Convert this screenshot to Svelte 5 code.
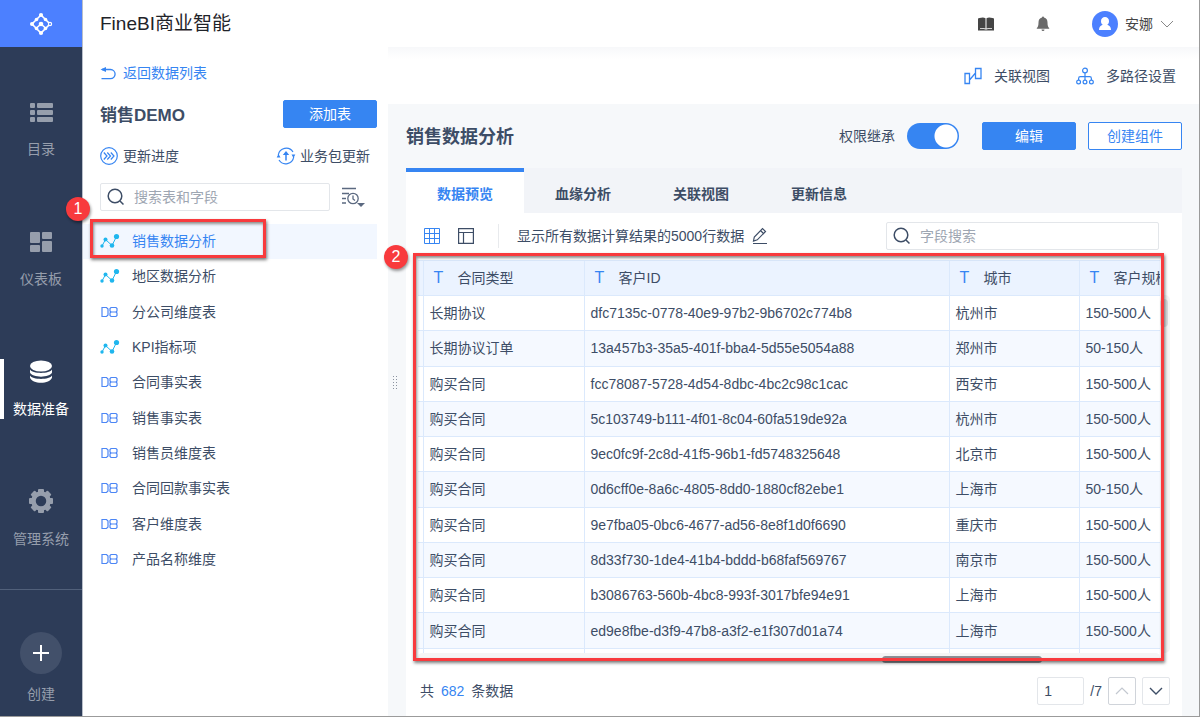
<script>
    const menu = [
        { id: "list", label: "目录" },
        { id: "board", label: "仪表板" },
        { id: "data", label: "数据准备" },
        { id: "gear", label: "管理系统" },
    ];

    const tables = [
        { name: "销售数据分析", type: "line" },
        { name: "地区数据分析", type: "line" },
        { name: "分公司维度表", type: "db" },
        { name: "KPI指标项", type: "line" },
        { name: "合同事实表", type: "db" },
        { name: "销售事实表", type: "db" },
        { name: "销售员维度表", type: "db" },
        { name: "合同回款事实表", type: "db" },
        { name: "客户维度表", type: "db" },
        { name: "产品名称维度", type: "db" },
    ];

    const tabs = ["数据预览", "血缘分析", "关联视图", "更新信息"];
    const columns = ["合同类型", "客户ID", "城市", "客户规模"];

    const rows = [
        ["长期协议", "dfc7135c-0778-40e9-97b2-9b6702c774b8", "杭州市", "150-500人"],
        ["长期协议订单", "13a457b3-35a5-401f-bba4-5d55e5054a88", "郑州市", "50-150人"],
        ["购买合同", "fcc78087-5728-4d54-8dbc-4bc2c98c1cac", "西安市", "150-500人"],
        ["购买合同", "5c103749-b111-4f01-8c04-60fa519de92a", "杭州市", "150-500人"],
        ["购买合同", "9ec0fc9f-2c8d-41f5-96b1-fd5748325648", "北京市", "150-500人"],
        ["购买合同", "0d6cff0e-8a6c-4805-8dd0-1880cf82ebe1", "上海市", "50-150人"],
        ["购买合同", "9e7fba05-0bc6-4677-ad56-8e8f1d0f6690", "重庆市", "150-500人"],
        ["购买合同", "8d33f730-1de4-41b4-bddd-b68faf569767", "南京市", "150-500人"],
        ["购买合同", "b3086763-560b-4bc8-993f-3017bfe94e91", "上海市", "150-500人"],
        ["购买合同", "ed9e8fbe-d3f9-47b8-a3f2-e1f307d01a74", "上海市", "150-500人"],
    ];

    let activeMenu = $state("data");
    let activeTable = $state(0);
    let activeTab = $state(0);
    let inherit = $state(true);
    let tableSearch = $state("");
    let fieldSearch = $state("");
    let page = $state("1");

    const teeth = [0, 45, 90, 135, 180, 225, 270, 315];
</script>

{#snippet searchIcon()}
    <svg width="18" height="18" viewBox="0 0 18 18" fill="none" stroke="#3d4d66" stroke-width="1.5">
        <circle cx="8" cy="8" r="6.8" />
        <path d="M13 13l3.500 3.500" />
    </svg>
{/snippet}

<div class="app">
    <aside class="sidebar">
        <a class="logo" href="#home" aria-label="FineBI">
            <svg width="24" height="24" viewBox="0 0 24 24" fill="#fff" stroke="#fff" stroke-width="1.6">
                <path d="M12 3L3 12L12 21L21 12L12 3" fill="none" />
                <path d="M7.5 16L12 12L16.5 16" fill="none" />
                <g stroke="none">
                    <circle cx="12" cy="3" r="2.1" />
                    <circle cx="12" cy="21" r="2.1" />
                    <circle cx="3" cy="12" r="2" />
                    <circle cx="12" cy="12" r="2.3" />
                    <circle cx="7.5" cy="7.5" r="1.8" />
                    <circle cx="16.5" cy="7.5" r="1.8" />
                    <circle cx="7.5" cy="16.5" r="1.8" />
                    <circle cx="16.5" cy="16.5" r="1.8" />
                </g>
                <circle cx="21" cy="12" r="1.6" fill="#4c80ff" stroke-width="1.2" />
            </svg>
        </a>
        <nav class="menu">
            {#each menu as item}
                <button class="menu-item" class:active={activeMenu === item.id} onclick={() => (activeMenu = item.id)}>
                    <svg width="26" height="26" viewBox="0 0 26 26" fill="currentColor">
                        {#if item.id === "list"}
                            <rect x="2" y="4" width="5" height="5" rx="1" />
                            <rect x="9" y="4" width="16" height="5" rx="1" />
                            <rect x="2" y="11" width="5" height="5" rx="1" />
                            <rect x="9" y="11" width="16" height="5" rx="1" />
                            <rect x="2" y="18" width="5" height="5" rx="1" />
                            <rect x="9" y="18" width="16" height="5" rx="1" />
                        {:else if item.id === "board"}
                            <rect x="2" y="3" width="10" height="11" rx="1" />
                            <rect x="14" y="3" width="10" height="7" rx="1" />
                            <rect x="2" y="16" width="10" height="7" rx="1" />
                            <rect x="14" y="12" width="10" height="11" rx="1" />
                        {:else if item.id === "data"}
                            <ellipse cx="13" cy="7" rx="11" ry="5.5" />
                            <path d="M2 10.500C4 15 22 15 24 10.500V13.500C22 19 4 19 2 13.500Z" />
                            <path d="M2 16.500C4 21 22 21 24 16.500V18.500C22 25.500 4 25.500 2 18.500Z" />
                        {:else}
                            <circle cx="13" cy="12" r="7.500" fill="none" stroke="currentColor" stroke-width="4.500" />
                            {#each teeth as angle}
                                <rect x="10" y="0" width="6" height="5" rx="1" transform="rotate({angle} 13 12)" />
                            {/each}
                        {/if}
                    </svg>
                    <span>{item.label}</span>
                </button>
            {/each}
        </nav>
        <button class="create">
            <span class="plus">
                <svg width="18" height="18" viewBox="0 0 18 18" stroke="#fff" stroke-width="2"><path d="M9 1V17M1 9H17" /></svg>
            </span>
            <span>创建</span>
        </button>
    </aside>

    <div class="right">
        <header class="topbar">
            <h1>FineBI商业智能</h1>
            <div class="user-area">
                <button class="icon-btn" aria-label="文档">
                    <svg width="16" height="14" viewBox="0 0 16 14" fill="#454545">
                        <path d="M0 1.500L1.500 1C4 .2 6 .2 7.500 1.200V11.500C6 10.800 4 10.700 2 11.200v.8c2-.4 4-.3 5.500.6h1c1.500-.9 3.500-1 5.500-.6v-.8c-2-.5-4-.4-5.500.3V1.200C10 .2 12 .2 14.500 1L16 1.500V13.500H0z" />
                    </svg>
                </button>
                <button class="icon-btn" aria-label="消息">
                    <svg width="14" height="16" viewBox="0 0 14 16" fill="#6a6a6a">
                        <path d="M6 1.500a1 1 0 0 1 2 0C10.500 2 11.500 4 11.500 6.500c0 3 .5 4.500 1.700 5.500v.8H.8V12C2 11 2.500 9.500 2.500 6.500 2.500 4 3.500 2 6 1.500zM5.500 13.500h3a1.500 1.500 0 0 1-3 0z" />
                    </svg>
                </button>
                <button class="user">
                    <svg width="26" height="26" viewBox="0 0 26 26">
                        <circle cx="13" cy="13" r="13" fill="#4c80ff" />
                        <path d="M13 6a4 4 0 0 1 4 4.200c0 1.800-.8 2.800-1.800 3.600C17.500 14.500 19 16 19 19H7c0-3 1.500-4.500 3.800-5.200C9.800 13 9 12 9 10.200A4 4 0 0 1 13 6z" fill="#fff" />
                    </svg>
                    <span>安娜</span>
                    <svg width="14" height="8" viewBox="0 0 14 8" fill="none" stroke="#888"><path d="M1 1l6 6 6-6" /></svg>
                </button>
            </div>
        </header>

        <div class="body">
            <section class="panel">
                <a class="back" href="#tables">
                    <svg width="16" height="14" viewBox="0 0 16 14" fill="none" stroke="#3685f2" stroke-width="1.3">
                        <path d="M2 3.500H10.500a4.600 4.600 0 0 1 0 9.200H1.500" />
                        <path d="M.5 3.500L6 1v5z" fill="#3685f2" stroke="none" />
                    </svg>
                    返回数据列表
                </a>
                <div class="panel-title">
                    <h2>销售DEMO</h2>
                    <button class="btn primary">添加表</button>
                </div>
                <div class="updates">
                    <button>
                        <svg width="18" height="18" viewBox="0 0 18 18" fill="none" stroke="#3685f2" stroke-width="1.2">
                            <circle cx="9" cy="9" r="8.3" />
                            <path d="M3.800 5.500L7 9l-3.200 3.500M7.300 5.500l3.200 3.500-3.200 3.500M10.800 5.500L14 9l-3.200 3.500" />
                        </svg>
                        更新进度
                    </button>
                    <button>
                        <svg width="18" height="18" viewBox="0 0 18 18" fill="none" stroke="#3685f2" stroke-width="1.2">
                            <path d="M1.300 8A8 8 0 0 1 16 5M16.700 10A8 8 0 0 1 2 13" />
                            <path d="M9 13.500V6" stroke-width="1.5" />
                            <path d="M5.800 8L9 4l3.200 4z M-.3 10.500L1.500 7l2 3.500z M18.300 7.500L16.500 11l-2-3.500z" fill="#3685f2" stroke="none" />
                        </svg>
                        业务包更新
                    </button>
                </div>
                <div class="search-row">
                    <label class="search">
                        {@render searchIcon()}
                        <input type="text" placeholder="搜索表和字段" aria-label="搜索表和字段" bind:value={tableSearch} />
                    </label>
                    <button class="icon-btn" aria-label="排序">
                        <svg width="25" height="20" viewBox="0 0 25 20" fill="none" stroke="#5b6980" stroke-width="1.3">
                            <path d="M1 1.500h14M1 6.500h7M1 11.500h4M1 16h4" />
                            <circle cx="12" cy="11.500" r="5.2" />
                            <path d="M12 8.500v3.500l2 1.500" />
                            <path d="M16 16h8l-4 4z" fill="#5b6980" stroke="none" />
                        </svg>
                    </button>
                </div>
                <div class="list-wrap">
                    <ul class="table-list">
                        {#each tables as table, i}
                            <li>
                                <button class:selected={activeTable === i} onclick={() => (activeTable = i)}>
                                    {#if table.type === "line"}
                                        <svg width="20" height="16" viewBox="0 0 20 16" fill="#1fb6ee">
                                            <path d="M2 13L5.500 6.500L12 12.500L16.500 3.500" fill="none" stroke="#1fb6ee" />
                                            <circle cx="2" cy="13" r="1.7" />
                                            <circle cx="5.500" cy="6.500" r="2" />
                                            <circle cx="12" cy="12.500" r="2.3" />
                                            <circle cx="16.500" cy="3.500" r="2.6" />
                                        </svg>
                                    {:else}
                                        <svg width="20" height="16" viewBox="0 0 20 16" fill="none" stroke="#4c86f5" stroke-width="1.2">
                                            <path d="M2 3.500h4.500l1.500 1.500v6l-1.500 1.500H2z" />
                                            <path d="M11 3.500h5l1 1v2.500l-1 1 1 1v2.500l-1 1h-5l-1-1V9l1-1-1-1V4.500zM11 8h5" />
                                        </svg>
                                    {/if}
                                    {table.name}
                                </button>
                            </li>
                        {/each}
                    </ul>
                    <div class="mark mark-list"><b class="num">1</b></div>
                </div>
            </section>

            <main>
                <div class="toolbar">
                    <button>
                        <svg width="18" height="18" viewBox="0 0 18 18" fill="none" stroke="#3685f2" stroke-width="1.3">
                            <path d="M1 6.500h4.500v10H1zM11.500 1.500H17v10h-5.500zM5.500 13L11.500 6" />
                        </svg>
                        关联视图
                    </button>
                    <button>
                        <svg width="18" height="18" viewBox="0 0 18 18" fill="none" stroke="#3685f2" stroke-width="1.2">
                            <circle cx="9" cy="3.500" r="2.4" />
                            <circle cx="2.600" cy="15" r="1.9" />
                            <circle cx="9" cy="15" r="1.9" />
                            <circle cx="15.400" cy="15" r="1.9" />
                            <path d="M9 6v7M2.600 13v-1.500c0-1.200.6-1.800 1.800-1.800h9.200c1.200 0 1.800.6 1.800 1.800V13" />
                        </svg>
                        多路径设置
                    </button>
                </div>

                <div class="content">
                    <div class="content-head">
                        <h2>销售数据分析</h2>
                        <label class="switch">
                            权限继承
                            <input type="checkbox" bind:checked={inherit} />
                        </label>
                        <button class="btn primary">编辑</button>
                        <button class="btn outline">创建组件</button>
                    </div>

                    <div class="tabs">
                        {#each tabs as tab, i}
                            <button class:active={activeTab === i} onclick={() => (activeTab = i)}>{tab}</button>
                        {/each}
                    </div>

                    <div class="card">
                        <div class="view-bar">
                            <button class="icon-btn" aria-label="表格">
                                <svg width="16" height="16" viewBox="0 0 16 16" fill="none" stroke="#3685f2"><path d="M.5.5h15v15H.5zM5.500.5v15M10.500.5v15M.5 5.500h15M.5 10.500h15" /></svg>
                            </button>
                            <button class="icon-btn" aria-label="布局">
                                <svg width="16" height="16" viewBox="0 0 16 16" fill="none" stroke="#3d4d66" stroke-width="1.2"><path d="M.6.6h14.800v14.800H.6zM.6 4.500h14.800M5.500 4.500v11" /></svg>
                            </button>
                            <span class="divider"></span>
                            <span>显示所有数据计算结果的5000行数据</span>
                            <button class="icon-btn edit" aria-label="修改行数">
                                <svg width="16" height="18" viewBox="0 0 16 18" fill="none" stroke="#3d4d66" stroke-width="1.2"><path d="M1.500 14l.8-4L10.500 1.500l3 3L5.300 12.800zM8.500 3.500l3 3M1 16.500h14" /></svg>
                            </button>
                            <label class="search field-search">
                                {@render searchIcon()}
                                <input type="text" placeholder="字段搜索" aria-label="字段搜索" bind:value={fieldSearch} />
                            </label>
                        </div>

                        <div class="grid-wrap">
                            <div class="grid">
                                <table>
                                    <colgroup>
                                        <col class="c-gap" /><col class="c-type" /><col class="c-id" /><col class="c-city" /><col class="c-size" />
                                    </colgroup>
                                    <thead>
                                        <tr>
                                            <th></th>
                                            {#each columns as column}
                                                <th><i>T</i>{column}</th>
                                            {/each}
                                        </tr>
                                    </thead>
                                    <tbody>
                                        {#each rows as row}
                                            <tr>
                                                <td></td>
                                                {#each row as cell}
                                                    <td>{cell}</td>
                                                {/each}
                                            </tr>
                                        {/each}
                                        <tr><td></td><td></td><td></td><td></td><td></td></tr>
                                    </tbody>
                                </table>
                            </div>
                            <div class="v-scroll"><span></span></div>
                            <div class="h-scroll"><span></span></div>
                            <div class="mark mark-grid"><b class="num">2</b></div>
                        </div>

                        <footer>
                            <p>共 <em>682</em> 条数据</p>
                            <input type="text" aria-label="页码" bind:value={page} />
                            <span>/7</span>
                            <button aria-label="上一页" disabled>
                                <svg width="14" height="8" viewBox="0 0 14 8" fill="none" stroke="#c3c8d0" stroke-width="1.2"><path d="M1 7l6-6 6 6" /></svg>
                            </button>
                            <button aria-label="下一页">
                                <svg width="14" height="8" viewBox="0 0 14 8" fill="none" stroke="#3d4d66" stroke-width="1.4"><path d="M1 1l6 6 6-6" /></svg>
                            </button>
                        </footer>
                    </div>
                </div>
                <span class="drag" aria-hidden="true"></span>
            </main>
        </div>
    </div>
</div>

<style>
    :global(body) {
        background: #fff;
    }

    .app {
        display: flex;
        min-height: 100vh;
        box-sizing: border-box;
        border-right: 1px solid #9b9b9b;
        border-bottom: 1px solid #9b9b9b;
        font-family: "Liberation Sans", "Noto Sans CJK SC", sans-serif;
        font-size: 14px;
        line-height: 20px;
        color: #3d4d66;
    }

    .app * {
        box-sizing: border-box;
    }

    button, input {
        font: inherit;
        color: inherit;
    }

    button {
        padding: 0;
        border: none;
        background: none;
        cursor: pointer;
        white-space: nowrap;
    }

    svg {
        flex: none;
        display: block;
        overflow: visible;
    }

    h1, h2, p, ul {
        margin: 0;
        padding: 0;
    }

    a {
        text-decoration: none;
    }

    .sidebar {
        flex: none;
        width: 83px;
        display: flex;
        flex-direction: column;
        background: #2d3c58;
        border-right: 1px solid #b9bfca;
        color: #969eac;
    }

    .logo {
        height: 47px;
        display: flex;
        align-items: center;
        justify-content: center;
        background: #4c80ff;
    }

    .menu {
        display: flex;
        flex-direction: column;
        gap: 70px;
        padding: 52px 0 40px;
    }

    .menu-item {
        height: 60px;
        display: flex;
        flex-direction: column;
        align-items: center;
        justify-content: space-between;
    }

    .menu-item.active {
        color: #fff;
        box-shadow: inset 4px 0 #fff;
    }

    .create {
        flex: 1;
        display: flex;
        flex-direction: column;
        align-items: center;
        gap: 10px;
        padding-top: 42px;
        border-top: 1px solid #51607a;
    }

    .plus {
        width: 42px;
        height: 42px;
        display: flex;
        align-items: center;
        justify-content: center;
        border-radius: 50%;
        background: #42506a;
    }

    .right {
        flex: 1;
        min-width: 0;
        display: flex;
        flex-direction: column;
    }

    .topbar {
        height: 47px;
        display: flex;
        align-items: center;
        justify-content: space-between;
        padding: 0 25px 0 17px;
    }

    h1 {
        font-size: 19px;
        font-weight: 400;
        color: #1f2329;
    }

    .user-area {
        display: flex;
        align-items: center;
        gap: 42px;
    }

    .user {
        display: flex;
        align-items: center;
        gap: 7px;
        color: #454545;
    }

    .body {
        flex: 1;
        display: flex;
    }

    .panel {
        flex: none;
        width: 305px;
        padding: 16px 11px 0 17px;
        display: flex;
        flex-direction: column;
    }

    .back {
        display: flex;
        align-items: center;
        gap: 7px;
        color: #3685f2;
    }

    .panel-title {
        display: flex;
        align-items: flex-end;
        justify-content: space-between;
        margin-top: 17px;
    }

    h2 {
        font-size: 17px;
        font-weight: 700;
        line-height: 24px;
    }

    .btn {
        width: 94px;
        height: 28px;
        border: 1px solid #3685f2;
        border-radius: 2px;
    }

    .primary {
        background: #3685f2;
        color: #fff;
    }

    .outline {
        background: #fff;
        color: #3685f2;
    }

    .updates {
        display: flex;
        justify-content: space-between;
        padding-right: 7px;
        margin-top: 18px;
    }

    .updates button {
        display: flex;
        align-items: center;
        gap: 5px;
    }

    .search-row {
        display: flex;
        align-items: center;
        justify-content: space-between;
        padding-right: 11px;
        margin-top: 17px;
    }

    .search {
        width: 230px;
        height: 28px;
        display: flex;
        align-items: center;
        gap: 9px;
        padding: 0 6px;
        border: 1px solid #e3e6ea;
        border-radius: 2px;
    }

    .search input {
        flex: 1;
        min-width: 0;
        padding: 0;
        border: none;
        outline: none;
        background: none;
    }

    .search input::placeholder {
        color: #9ea6b2;
    }

    .list-wrap {
        position: relative;
        margin: 13px 0 0 -17px;
    }

    .table-list {
        height: 353px;
        display: grid;
        grid-auto-rows: 1fr;
        list-style: none;
    }

    .table-list button {
        width: 100%;
        height: 100%;
        display: flex;
        align-items: center;
        gap: 12px;
        padding: 0 0 1px 17px;
    }

    .table-list .selected {
        background: #f2f7ff;
        color: #3685f2;
    }

    .mark {
        position: absolute;
        border: 3px solid #f83a3d;
        box-shadow: 1px 2px 3px rgba(0, 0, 0, 0.5), inset 1px 2px 3px rgba(0, 0, 0, 0.45);
        pointer-events: none;
    }

    .mark-list {
        left: 7px;
        top: -5px;
        width: 176px;
        height: 39px;
    }

    .num {
        position: absolute;
        left: -27px;
        top: -25px;
        width: 24px;
        height: 24px;
        border-radius: 50%;
        background: #f83a3d;
        box-shadow: 1px 2px 3px rgba(0, 0, 0, 0.4);
        color: #fff;
        font-size: 16px;
        font-weight: 400;
        line-height: 24px;
        text-align: center;
    }

    main {
        position: relative;
        flex: 1;
        min-width: 0;
        display: flex;
        flex-direction: column;
        background: linear-gradient(#f7f8fa, #fff 12px);
    }

    .toolbar {
        height: 57px;
        display: flex;
        align-items: center;
        justify-content: flex-end;
        gap: 26px;
        padding-right: 23px;
    }

    .toolbar button {
        display: flex;
        align-items: center;
        gap: 12px;
    }

    .content {
        flex: 1;
        display: flex;
        flex-direction: column;
        padding: 0 17px 0 18px;
        background: #f6f8fa;
    }

    .content-head {
        height: 64px;
        display: flex;
        align-items: center;
        gap: 12px;
    }

    .content-head h2 {
        margin-right: auto;
        padding-top: 2px;
        font-size: 18px;
    }

    .switch {
        display: flex;
        align-items: center;
        gap: 12px;
        margin-right: 11px;
    }

    .switch input {
        appearance: none;
        width: 52px;
        height: 26px;
        margin: 0;
        border-radius: 13px;
        background: radial-gradient(circle at 39px 13px, #fff 11px, #3685f2 12px);
    }

    .switch input:not(:checked) {
        background: radial-gradient(circle at 13px 13px, #fff 11px, #c3c8d0 12px);
    }

    .tabs {
        display: flex;
        background: #f2f4f8;
    }

    .tabs button {
        width: 118px;
        height: 45px;
        padding-top: 6px;
        font-weight: 700;
    }

    .tabs .active {
        padding-top: 2px;
        border-top: 4px solid #3685f2;
        background: #fff;
        color: #3685f2;
    }

    .card {
        flex: 1;
        background: #fff;
    }

    .view-bar {
        display: flex;
        align-items: center;
        padding: 9px 23px 0 18px;
    }

    .view-bar .icon-btn + .icon-btn {
        margin-left: 18px;
    }

    .divider {
        width: 1px;
        height: 24px;
        margin: 0 18px 0 24px;
        background: #e8eaed;
    }

    .edit {
        margin-left: 8px;
    }

    .field-search {
        width: 273px;
        margin-left: auto;
    }

    .grid-wrap {
        position: relative;
        display: grid;
        grid-template-columns: minmax(0, 1fr) 10px;
        margin: 10px 12px 0;
    }

    .grid {
        height: 393px;
        overflow: hidden;
    }

    table {
        width: 801px;
        height: 424px;
        table-layout: fixed;
        border-collapse: collapse;
    }

    .c-gap { width: 5px; }
    .c-type { width: 161px; }
    .c-id { width: 365px; }
    .c-city { width: 130px; }
    .c-size { width: 140px; }

    th, td {
        height: 35px;
        padding: 0 6px;
        border: 1px solid #dbe9fc;
        text-align: left;
        white-space: nowrap;
    }

    th:first-child, td:first-child {
        padding: 0;
        border-left: none;
    }

    th {
        padding-left: 10px;
        background: #ebf3ff;
        font-weight: 400;
    }

    th i {
        display: inline-block;
        width: 24px;
        color: #3685f2;
        font-size: 16px;
        font-style: normal;
    }

    tbody tr:nth-child(even) {
        background: #f5f9ff;
    }

    .v-scroll {
        margin-top: 35px;
        background: #f5f5f5;
        border-radius: 5px;
    }

    .v-scroll span {
        display: block;
        width: 8px;
        height: 28px;
        margin-top: 4px;
        border-radius: 4px;
        background: #dcdddf;
    }

    .h-scroll {
        height: 9px;
        background: #f5f5f5;
        border-radius: 5px;
    }

    .h-scroll span {
        display: block;
        width: 160px;
        height: 7px;
        margin: 3px 118px 0 auto;
        border-radius: 4px;
        background: #8c8f95;
    }

    .mark-grid {
        inset: -7px 6px 1px -5px;
    }

    .mark-grid .num {
        left: -32px;
        top: -11px;
    }

    footer {
        display: flex;
        align-items: center;
        gap: 6px;
        padding: 15px 12px 10px 14px;
    }

    footer p {
        margin-right: auto;
    }

    footer em {
        margin: 0 3px;
        color: #3685f2;
        font-style: normal;
    }

    footer input {
        width: 47px;
        height: 28px;
        padding: 0 6px;
        border: 1px solid #e3e6ea;
        border-radius: 2px;
    }

    footer button {
        width: 28px;
        height: 28px;
        display: flex;
        align-items: center;
        justify-content: center;
        border: 1px solid #e3e6ea;
        border-radius: 2px;
    }

    footer button:disabled {
        border-color: #d0d4da;
    }

    .drag {
        position: absolute;
        left: 4px;
        top: 328px;
        width: 6px;
        height: 15px;
        background: radial-gradient(circle, #8b93a0 1px, transparent 1px) 0 0 / 3px 3px;
    }
</style>
